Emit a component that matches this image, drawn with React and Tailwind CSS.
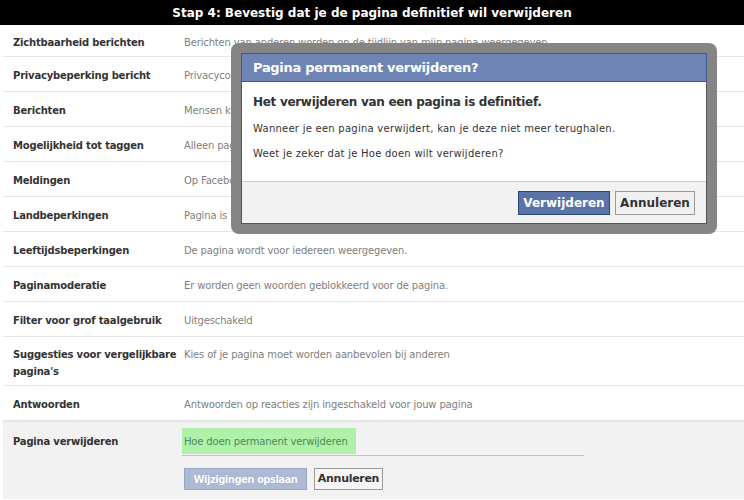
const ROWS = [
  { label: 'Zichtbaarheid berichten', value: 'Berichten van anderen worden op de tijdlijn van mijn pagina weergegeven', h: 'h-[32px]' },
  { label: 'Privacybeperking bericht', value: 'Privacycontrole voor berichten is uitgeschakeld' },
  { label: 'Berichten', value: 'Mensen kunnen contact opnemen met mijn pagina' },
  { label: 'Mogelijkheid tot taggen', value: 'Alleen paginabeheerders kunnen foto\u2019s taggen' },
  { label: 'Meldingen', value: 'Op Facebook' },
  { label: 'Landbeperkingen', value: 'Pagina is voor iedereen zichtbaar.' },
  { label: 'Leeftijdsbeperkingen', value: 'De pagina wordt voor iedereen weergegeven.' },
  { label: 'Paginamoderatie', value: 'Er worden geen woorden geblokkeerd voor de pagina.' },
  { label: 'Filter voor grof taalgebruik', value: 'Uitgeschakeld' },
  { label: "Suggesties voor vergelijkbare pagina's", value: 'Kies of je pagina moet worden aanbevolen bij anderen', tall: true },
  { label: 'Antwoorden', value: 'Antwoorden op reacties zijn ingeschakeld voor jouw pagina' },
];

function SettingRow({ label, value, h, tall }) {
  if (tall) {
    return (
      <div className="flex border-b border-[#e5e5e5] h-[49px] pt-[9px] leading-[17px]">
        <div className="w-[181px] shrink-0 pl-[10px] font-bold text-[#333] tracking-[-0.2px]">{label}</div>
        <div className="text-[#808080] tracking-[-0.15px]">{value}</div>
      </div>
    );
  }
  return (
    <div className={`flex items-center border-b border-[#e5e5e5] pt-[3px] ${h || 'h-[35px]'}`}>
      <div className="w-[181px] shrink-0 pl-[10px] font-bold text-[#333] whitespace-nowrap tracking-[-0.2px]">{label}</div>
      <div className="text-[#808080] whitespace-nowrap tracking-[-0.15px]">{value}</div>
    </div>
  );
}

export default function App() {
  return (
    <div className="relative w-[744px] h-[500px] overflow-hidden bg-white font-['DejaVu_Sans',sans-serif] text-[10px]">
      {/* Step banner */}
      <div className="h-[25px] bg-black text-white font-bold text-[12px] flex items-center justify-center">
        Stap 4: Bevestig dat je de pagina definitief wil verwijderen
      </div>

      {/* Settings list */}
      <div className="pl-[3px]">
        {ROWS.map((row) => (
          <SettingRow key={row.label} {...row} />
        ))}

        {/* Delete page section */}
        <div className="flex bg-[#f2f2f2] border-t border-[#e0e0e0] h-[78px] pt-[6px]">
          <div className="w-[179px] shrink-0 pl-[10px] pt-[1px] font-bold text-[#333] leading-[26px] tracking-[-0.2px]">Pagina verwijderen</div>
          <div className="w-[402px]">
            <div className="border-b border-[#c4c4c4] pb-[1px]">
              <div className="w-[174px] h-[26px] bg-[#b0f1a9] pl-[2px] pt-[1px] leading-[26px] text-[#4a8a5c] whitespace-nowrap tracking-[-0.15px]">
                Hoe doen permanent verwijderen
              </div>
            </div>
            <div className="flex gap-[7px] mt-[12px] pl-[2px]">
              <button className="w-[123px] h-[22px] bg-[#adbad4] border border-[#9aa8c6] text-white font-bold text-[10px] tracking-[-0.5px] whitespace-nowrap [text-shadow:0_0_1px_#7f8fb5]">
                Wijzigingen opslaan
              </button>
              <button className="w-[69px] h-[22px] bg-[#f5f5f5] border border-[#999] text-[#333] font-bold text-[11px] tracking-[-0.3px]">
                Annuleren
              </button>
            </div>
          </div>
        </div>
      </div>

      {/* Confirmation dialog */}
      <div className="absolute left-[231px] top-[43px] w-[486px] h-[191px] bg-[#858585] rounded-[8px] p-[10px]">
        <div className="h-full flex flex-col bg-white border border-[#555]">
          <div className="h-[29px] -mx-px -mt-px bg-[#6d84b4] border border-[#3b5998] text-white font-bold text-[13px] tracking-[-0.3px] flex items-center pl-[11px] pt-[1px]">
            Pagina permanent verwijderen?
          </div>
          <div className="flex-1 px-[11px] pt-[12px] text-[#333]">
            <div className="font-bold text-[12px] leading-[16px] tracking-[-0.3px]">Het verwijderen van een pagina is definitief.</div>
            <div className="mt-[12px] leading-[14px] tracking-[0.25px]">Wanneer je een pagina verwijdert, kan je deze niet meer terughalen.</div>
            <div className="mt-[11px] leading-[14px] tracking-[0.25px]">Weet je zeker dat je Hoe doen wilt verwijderen?</div>
          </div>
          <div className="h-[42px] bg-[#f2f2f2] border-t border-[#ccc] flex items-center justify-end gap-[5px] pr-[11px]">
            <button className="w-[92px] h-[24px] bg-[#5b74a8] border border-[#29447e] text-white font-bold text-[12px]">
              Verwijderen
            </button>
            <button className="w-[80px] h-[24px] bg-[#f0f0f0] border border-[#999] text-[#333] font-bold text-[12px]">
              Annuleren
            </button>
          </div>
        </div>
      </div>
    </div>
  );
}
